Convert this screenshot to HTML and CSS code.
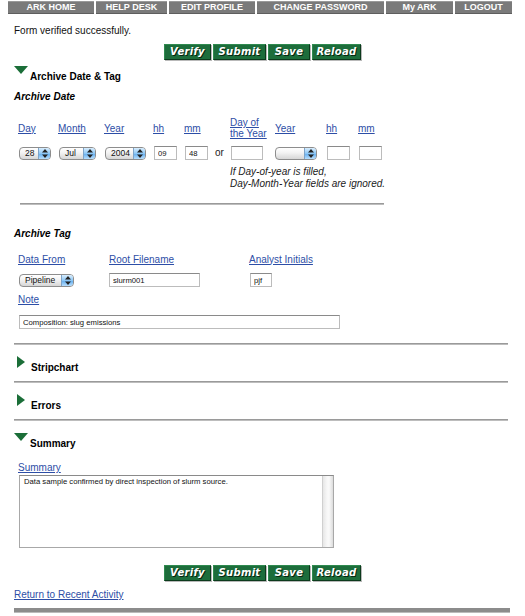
FILE: index.html
```html
<!DOCTYPE html>
<html>
<head>
<meta charset="utf-8">
<title>ARK Archive Form</title>
<link rel="stylesheet" href="styles.css">
</head>
<body>
<nav class="nav">
  <a class="nav-cell">ARK HOME</a>
  <a class="nav-cell">HELP DESK</a>
  <a class="nav-cell">EDIT PROFILE</a>
  <a class="nav-cell">CHANGE PASSWORD</a>
  <a class="nav-cell">My ARK</a>
  <a class="nav-cell">LOGOUT</a>
</nav>

<div class="page">
  <p class="status">Form verified successfully.</p>

  <div class="actions actions-top">
    <button class="gbtn w-verify">Verify</button>
    <button class="gbtn w-submit">Submit</button>
    <button class="gbtn w-save">Save</button>
    <button class="gbtn w-reload">Reload</button>
  </div>

  <div class="sec-head sec-first">
    <span class="tri-down"></span>
    <span class="sec-title">Archive Date &amp; Tag</span>
  </div>

  <h3 class="sub-title st-date">Archive Date</h3>

  <div class="date-grid">
    <a class="lbl" href="#">Day</a>
    <a class="lbl" href="#">Month</a>
    <a class="lbl" href="#">Year</a>
    <a class="lbl" href="#">hh</a>
    <a class="lbl" href="#">mm</a>
    <span></span>
    <a class="lbl" href="#">Day of<br>the Year</a>
    <a class="lbl" href="#">Year</a>
    <a class="lbl" href="#">hh</a>
    <a class="lbl" href="#">mm</a>

    <div class="sel w-day"><span class="sel-val">28</span><span class="sel-arr"><svg width="6" height="9" viewBox="0 0 6 9"><path d="M3 0L6 3.5H0Z M3 9L0 5.5H6Z" fill="#222"/></svg></span></div>
    <div class="sel w-month"><span class="sel-val">Jul</span><span class="sel-arr"><svg width="6" height="9" viewBox="0 0 6 9"><path d="M3 0L6 3.5H0Z M3 9L0 5.5H6Z" fill="#222"/></svg></span></div>
    <div class="sel w-year"><span class="sel-val">2004</span><span class="sel-arr"><svg width="6" height="9" viewBox="0 0 6 9"><path d="M3 0L6 3.5H0Z M3 9L0 5.5H6Z" fill="#222"/></svg></span></div>
    <input class="txt w-hh" type="text" value="09">
    <input class="txt w-hh" type="text" value="48">
    <span class="or">or</span>
    <input class="txt w-doy" type="text" value="">
    <div class="sel w-year2 sel-flush"><span class="sel-val"></span><span class="sel-arr"><svg width="6" height="9" viewBox="0 0 6 9"><path d="M3 0L6 3.5H0Z M3 9L0 5.5H6Z" fill="#222"/></svg></span></div>
    <input class="txt w-hh" type="text" value="">
    <input class="txt w-hh" type="text" value="">

    <p class="date-note">If Day-of-year is filled,<br>Day-Month-Year fields are ignored.</p>
  </div>

  <hr class="rule rule-short">

  <h3 class="sub-title st-tag">Archive Tag</h3>

  <div class="tag-grid">
    <a class="lbl" href="#">Data From</a>
    <a class="lbl" href="#">Root Filename</a>
    <a class="lbl" href="#">Analyst Initials</a>
    <div class="sel w-pipe"><span class="sel-val">Pipeline</span><span class="sel-arr"><svg width="6" height="9" viewBox="0 0 6 9"><path d="M3 0L6 3.5H0Z M3 9L0 5.5H6Z" fill="#222"/></svg></span></div>
    <input class="txt w-root" type="text" value="slurm001">
    <input class="txt w-init" type="text" value="pjf">
  </div>
  <a class="lbl note-lbl" href="#">Note</a>
  <input class="txt w-note" type="text" value="Composition: slug emissions">

  <hr class="rule rule-full rule-a">

  <div class="sec-head sec-closed">
    <span class="tri-right"></span>
    <span class="sec-title">Stripchart</span>
  </div>

  <hr class="rule rule-full rule-b">

  <div class="sec-head sec-closed">
    <span class="tri-right"></span>
    <span class="sec-title">Errors</span>
  </div>

  <hr class="rule rule-full rule-b">

  <div class="sec-head sec-summary">
    <span class="tri-down"></span>
    <span class="sec-title">Summary</span>
  </div>

  <a class="lbl sum-lbl" href="#">Summary</a>
  <div class="ta">
    <textarea class="ta-text">Data sample confirmed by direct inspection of slurm source.</textarea>
    <div class="ta-scroll"></div>
  </div>

  <div class="actions actions-bottom">
    <button class="gbtn w-verify">Verify</button>
    <button class="gbtn w-submit">Submit</button>
    <button class="gbtn w-save">Save</button>
    <button class="gbtn w-reload">Reload</button>
  </div>

  <a class="lbl return" href="#">Return to Recent Activity</a>

  <div class="bottom-bar"></div>
</div>
</body>
</html>
```

FILE: styles.css
```css
* { box-sizing: border-box; }

body {
  margin: 0;
  background: #fff;
  font-family: "Liberation Sans", Arial, sans-serif;
  color: #000;
  width: 525px;
}

/* nav */
.nav {
  display: grid;
  grid-template-columns: 86px 71px 86px 127px 67px 57px;
  column-gap: 2px;
  margin: 1px 0 0 8px;
  height: 13px;
}
.nav-cell {
  display: flex;
  align-items: center;
  justify-content: center;
  background: #7a7a7a;
  border-top: 1px solid #999;
  border-bottom: 1px solid #5e5e5e;
  color: #fff;
  font-weight: bold;
  font-size: 9px;
  line-height: 11px;
  text-decoration: none;
}

.page {
  padding-left: 14px;
  width: 511px;
}

.status {
  margin: 11px 0 0 0;
  font-size: 10px;
  line-height: 12px;
  color: #111;
}

/* green buttons */
.actions {
  display: flex;
  justify-content: center;
  gap: 2px;
  height: 16px;
  margin-left: -14px;
  width: 525px;
}
.actions-top { margin-top: 7px; }
.actions-bottom { margin-top: 17px; }
.gbtn {
  height: 16px;
  padding: 0;
  background: #1d6d3b;
  border: 1px solid #0c3a1c;
  border-top-color: #2f8a4f;
  border-left-color: #2f8a4f;
  box-shadow: 1px 1px 0 #b9b9b9;
  color: #fff;
  font-family: "DejaVu Sans", Verdana, sans-serif;
  font-style: italic;
  font-weight: bold;
  font-size: 10px;
  letter-spacing: 0.3px;
  line-height: 14px;
  text-shadow: 1px 1px 0 #06250f;
}
.w-verify { width: 47px; }
.w-submit { width: 53px; }
.w-save { width: 42px; }
.w-reload { width: 49px; }

/* section headers */
.sec-head {
  display: flex;
  align-items: flex-start;
}
.sec-title {
  font-size: 10px;
  font-weight: bold;
  line-height: 12px;
}
.tri-down {
  width: 0;
  height: 0;
  border-left: 7.5px solid transparent;
  border-right: 7.5px solid transparent;
  border-top: 8px solid #1b6e38;
  margin-right: 2px;
}
.tri-right {
  width: 0;
  height: 0;
  border-top: 6.5px solid transparent;
  border-bottom: 6.5px solid transparent;
  border-left: 8px solid #1b6e38;
  margin-left: 3px;
  margin-right: 6px;
}
.sec-first { margin-top: 6px; }
.sec-first .sec-title { padding-top: 5px; }
.sec-closed { margin-top: 11px; }
.sec-closed .sec-title { padding-top: 6px; }
.sec-summary { margin-top: 12px; }
.sec-summary .sec-title { padding-top: 5px; }

.sub-title {
  margin: 0;
  font-size: 10px;
  font-weight: bold;
  font-style: italic;
  line-height: 12px;
}
.st-date { margin-top: 8px; }
.st-tag { margin-top: 23px; }

/* links */
.lbl {
  color: #2d4ea6;
  font-size: 10px;
  line-height: 11px;
  text-decoration: underline;
}

/* date grid */
.date-grid {
  display: grid;
  grid-template-columns: 40px 46px 49px 31px 31px 15px 45px 51px 32px 40px;
  grid-template-rows: 22px 14px auto;
  row-gap: 7px;
  align-items: center;
  margin: 14px 0 0 4px;
}
.or {
  font-size: 10px;
  line-height: 12px;
  color: #222;
}
.date-note {
  grid-column: 7 / 11;
  margin: -1px 0 0 0;
  font-size: 10px;
  font-style: italic;
  line-height: 12px;
  color: #222;
}

/* selects */
.sel {
  display: flex;
  height: 13px;
  margin-left: 1px;
  border: 1px solid #8d8d8d;
  border-radius: 4px;
  overflow: hidden;
  background: linear-gradient(#ffffff, #f2f2f2 45%, #d6d6d6);
  font-size: 8.5px;
  line-height: 11px;
  color: #111;
}
.sel-flush { margin-left: 0; }
.sel-val {
  flex: 1;
  padding-left: 5px;
  white-space: nowrap;
}
.sel-arr {
  width: 12px;
  display: flex;
  align-items: center;
  justify-content: center;
  border-left: 1px solid #7da3c8;
  background: linear-gradient(#d9eefe, #8cc6f5 50%, #68b0ef 55%, #b9defc);
}
.w-day { width: 32px; }
.w-month { width: 37px; }
.w-year { width: 41px; }
.w-year2 { width: 42px; }
.w-pipe { width: 55px; }

/* text inputs */
.txt {
  height: 14px;
  margin: 0 0 0 1px;
  padding: 0 0 0 3px;
  border: 1px solid #bcbcbc;
  border-top-color: #8a8a8a;
  background: #fff;
  font-family: "Liberation Sans", Arial, sans-serif;
  font-size: 7.7px;
  color: #111;
  outline: none;
}
.w-hh { width: 23px; }
.w-doy { width: 32px; }
.w-root { width: 91px; margin-left: 0; }
.w-init { width: 22px; margin-left: 1px; }
.w-note { display: block; width: 321px; margin: 9px 0 0 5px; }

/* rules */
.rule {
  border: 0;
  height: 2px;
  background: #bdbdbd;
  border-top: 1px solid #9a9a9a;
  margin: 0;
}
.rule-short { width: 364px; margin: 13px 0 0 6px; }
.rule-full { width: 494px; }
.rule-a { margin-top: 14px; }
.rule-b { margin-top: 7px; }

/* tag grid */
.tag-grid {
  display: grid;
  grid-template-columns: 91px 140px 100px;
  grid-template-rows: 12px 14px;
  row-gap: 8px;
  align-items: center;
  margin: 13px 0 0 4px;
}
.tag-grid .sel { width: 55px; }
.note-lbl {
  display: block;
  width: max-content;
  margin: 7px 0 0 4px;
  line-height: 12px;
}

/* summary */
.sum-lbl {
  display: block;
  width: max-content;
  margin: 12px 0 0 4px;
  line-height: 12px;
}
.ta {
  display: flex;
  width: 315px;
  height: 73px;
  margin: 1px 0 0 5px;
  border: 1px solid #a8a8a8;
  border-top-color: #8a8a8a;
}
.ta-text {
  flex: 1;
  border: 0;
  margin: 0;
  padding: 1px 0 0 4px;
  resize: none;
  font-family: "Liberation Sans", Arial, sans-serif;
  font-size: 7.7px;
  line-height: 10px;
  color: #111;
  outline: none;
  overflow: hidden;
}
.ta-scroll {
  width: 11px;
  border-left: 1px solid #d0d0d0;
  background: linear-gradient(90deg, #e6e6e6, #f7f7f7 40%, #fafafa 60%, #dcdcdc);
}

.return {
  display: block;
  width: max-content;
  margin-top: 8px;
  line-height: 12px;
}

.bottom-bar {
  width: 496px;
  height: 5px;
  margin-top: 7px;
  background: #8c8c8c;
  border-bottom: 1px solid #bbb;
}
```
